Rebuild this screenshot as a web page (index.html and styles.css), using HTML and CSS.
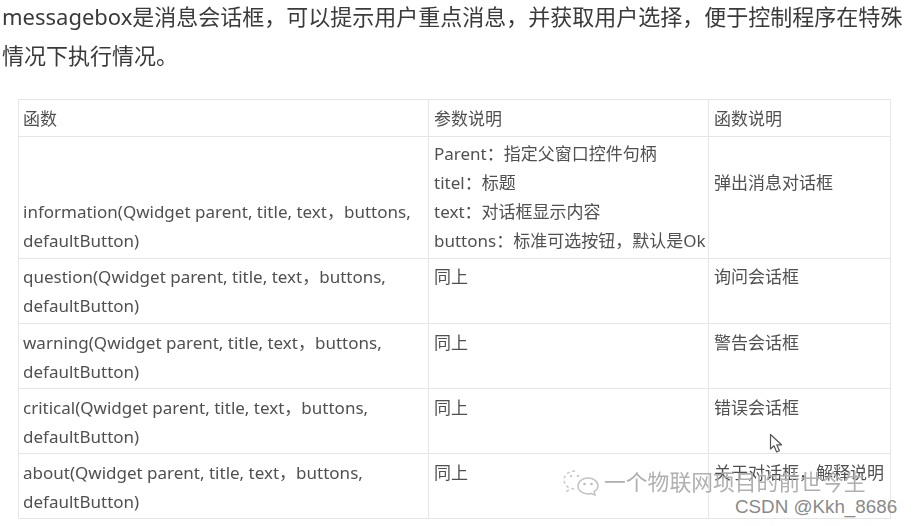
FILE: index.html
```html
<!DOCTYPE html>
<html lang="zh">
<head>
<meta charset="utf-8">
<title>messagebox</title>
<link rel="stylesheet" href="styles.css">
</head>
<body>
<main class="page">
  <p class="intro">messagebox是消息会话框，可以提示用户重点消息，并获取用户选择，便于控制程序在特殊情况下执行情况。</p>
  <table class="funcs">
    <colgroup><col class="c1"><col class="c2"><col class="c3"></colgroup>
    <tr class="head"><td>函数</td><td>参数说明</td><td>函数说明</td></tr>
    <tr class="first">
      <td class="bottom">information(Qwidget parent, title, text，buttons, defaultButton)</td>
      <td>Parent：指定父窗口控件句柄<br>titel：标题<br>text：对话框显示内容<br>buttons：标准可选按钮，默认是Ok</td>
      <td class="second-line">弹出消息对话框</td>
    </tr>
    <tr class="tight"><td>question(Qwidget parent, title, text，buttons, defaultButton)</td><td>同上</td><td>询问会话框</td></tr>
    <tr><td>warning(Qwidget parent, title, text，buttons, defaultButton)</td><td>同上</td><td>警告会话框</td></tr>
    <tr><td>critical(Qwidget parent, title, text，buttons, defaultButton)</td><td>同上</td><td>错误会话框</td></tr>
    <tr><td>about(Qwidget parent, title, text，buttons, defaultButton)</td><td>同上</td><td>关于对话框，解释说明</td></tr>
  </table>
  <svg class="cursor" width="14" height="21" viewBox="0 0 14 21" aria-hidden="true">
    <path d="M1.500 1.500V16L5 12.800L7.600 19L10.400 17.800L7.800 11.800H12.500Z" fill="#fff" stroke="#555" stroke-width="1.200" stroke-linejoin="round"/>
  </svg>
  <div class="mark">
    <svg class="wechat" width="38" height="28" viewBox="0 0 38 28" aria-hidden="true">
      <path d="M13 3C7 3 2 7 2 12c0 3 1.500 5 4 7l-1 4 4.500-2.500c1.500.5 2.500.5 4 .5" fill="none" stroke="#c9c9c9" stroke-width="1.500" stroke-dasharray="3 2.500"/>
      <path d="M26 10c-5.500 0-10 3.500-10 8s4.500 8 10 8c1.200 0 2.300-.2 3.300-.5L33 27l-.8-3.500c2.300-1.500 3.800-3.500 3.800-5.500 0-4.500-4.500-8-10-8Z" fill="none" stroke="#c4c4c4" stroke-width="1.500"/>
      <circle cx="22.500" cy="16" r="1.300" fill="#bbb"/><circle cx="29.500" cy="16" r="1.300" fill="#bbb"/>
      <circle cx="9" cy="8" r="1.300" fill="#ccc"/><circle cx="16" cy="8" r="1.300" fill="#ccc"/>
    </svg>
    <span class="mark-text">一个物联网项目的前世今生</span>
  </div>
  <div class="credit">CSDN @Kkh_8686</div>
</main>
</body>
</html>
```
FILE: styles.css
```css
html, body {
  margin: 0;
  background: #fff;
}
body {
  font-family: "Noto Sans", "Noto Sans CJK SC", sans-serif;
  overflow: hidden;
}
.page {
  position: relative;
  width: 913px;
  height: 526px;
  overflow: hidden;
  padding: 0 8px 0 2px;
  box-sizing: border-box;
}
.intro {
  margin: -3px 0 0;
  font-size: 22px;
  line-height: 39px;
  color: #3a3a3a;
  filter: blur(0.45px);
}
.funcs {
  margin: 24px 0 0 16px;
  width: 872px;
  table-layout: fixed;
  border-collapse: collapse;
  font-size: 17px;
  line-height: 29px;
  color: #505050;
  filter: blur(0.5px);
}
.c1 { width: 410px; }
.c2 { width: 280px; }
.c3 { width: 182px; }
.funcs td {
  border: 1.500px solid #e6e6e6;
  padding: 4px 0 0 5px;
  vertical-align: top;
  height: 65px;
  box-sizing: border-box;
}
.funcs td:first-child {
  padding-left: 4px;
}
.funcs .tight td {
  padding-top: 3px;
}
.funcs .head td {
  height: 37px;
  padding-top: 4px;
}
.funcs .first td {
  height: 122px;
  padding-top: 2px;
}
.funcs .first td.bottom {
  vertical-align: bottom;
  padding-bottom: 3px;
}
.funcs .first td.second-line {
  padding-top: 31px;
}
.cursor {
  position: absolute;
  left: 769px;
  top: 433px;
}
.mark {
  position: absolute;
  left: 562px;
  top: 467px;
  display: flex;
  align-items: center;
  gap: 4px;
  filter: blur(0.6px);
}
.mark-text {
  font-size: 21.800px;
  line-height: 30px;
  color: #b0b0b0;
  white-space: nowrap;
}
.credit {
  position: absolute;
  left: 735px;
  top: 495px;
  font-family: "Liberation Sans", sans-serif;
  font-size: 18.800px;
  line-height: 24px;
  color: #8a8a8a;
  white-space: nowrap;
}
```
